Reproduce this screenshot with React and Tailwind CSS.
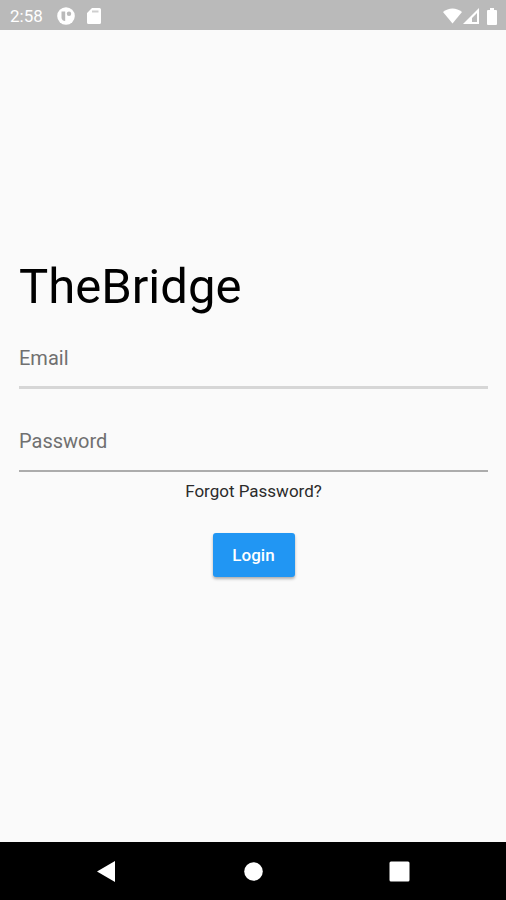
function StatusBar() {
  return (
    <header className="flex h-[30px] items-center bg-[#bababa] pt-[2px] pr-[9px] pl-[10px] text-white">
      <span className="text-[17px] leading-5">2:58</span>
      <svg className="ml-[14px] size-[18px]" viewBox="0 0 18 18" aria-hidden="true">
        <circle cx="9" cy="9" r="8.800" fill="#fff" />
        <path d="M4.500 4.500h3.700v9.500c-2.200 0-3.200-1.200-3.700-3z" fill="#bababa" />
        <circle cx="12" cy="6.800" r="2.200" fill="#bababa" />
      </svg>
      <svg className="ml-[12px] h-[16px] w-[14px]" viewBox="0 0 14 16" aria-hidden="true">
        <path d="M5 0h7.500A1.500 1.500 0 0 1 14 1.500v13a1.500 1.500 0 0 1-1.500 1.500h-11A1.500 1.500 0 0 1 0 14.500V5z" fill="#fff" />
        <path d="M5 2.500h6.500v2H5z" fill="#cfcfcf" />
      </svg>
      <svg className="ml-auto h-[16px] w-[19px]" viewBox="0 0 19 16" aria-hidden="true">
        <path d="M9.500 15.500 0 4C5.500-.8 13.500-.8 19 4z" fill="#fff" />
      </svg>
      <svg className="ml-[1px] size-[16px]" viewBox="0 0 16 16" aria-hidden="true">
        <path d="M16 0v16H0zM14 5 9 10v4h5z" fill="#fff" fillRule="evenodd" />
      </svg>
      <svg className="ml-[8px] h-[17px] w-[10px]" viewBox="0 0 10 17" aria-hidden="true">
        <path d="M3 0h4v2h2a1 1 0 0 1 1 1v13a1 1 0 0 1-1 1H1a1 1 0 0 1-1-1V3a1 1 0 0 1 1-1h2z" fill="#fff" />
      </svg>
    </header>
  );
}

function NavBar() {
  return (
    <nav className="flex h-[58px] items-center justify-center gap-[125px] bg-black">
      <button type="button" aria-label="Back">
        <svg className="size-[21px]" viewBox="0 0 21 21" aria-hidden="true">
          <path d="M18 0v21L0 10.500z" fill="#fff" />
        </svg>
      </button>
      <button type="button" aria-label="Home">
        <svg className="size-[21px]" viewBox="0 0 21 21" aria-hidden="true">
          <circle cx="10.500" cy="10.500" r="9.300" fill="#fff" />
        </svg>
      </button>
      <button type="button" aria-label="Recent apps">
        <svg className="size-[21px]" viewBox="0 0 21 21" aria-hidden="true">
          <rect x="0.500" y="0.500" width="20" height="20" rx="1.500" fill="#fff" />
        </svg>
      </button>
    </nav>
  );
}

export default function App() {
  return (
    <div className="flex min-h-screen flex-col bg-[#fafafa] font-['Roboto','Liberation_Sans',sans-serif]">
      <StatusBar />
      <main className="flex flex-1 flex-col justify-center pr-[18px] pb-[38px] pl-[19px]">
        <h1 className="text-[49px] leading-[58px] text-black">TheBridge</h1>
        <form className="flex flex-col" onSubmit={(e) => e.preventDefault()}>
          <input
            type="email"
            aria-label="Email"
            placeholder="Email"
            className="mt-[14px] h-[59px] w-full border-b-3 border-[#d6d6d6] bg-transparent text-[20px] leading-6 text-black outline-none placeholder:text-[#707070]"
          />
          <input
            type="password"
            aria-label="Password"
            placeholder="Password"
            className="mt-[24px] h-[59px] w-full border-b-2 border-[#acacac] bg-transparent text-[20px] leading-6 text-black outline-none placeholder:text-[#707070]"
          />
          <a href="#forgot" className="mt-[9px] self-center text-[17px] leading-5 text-[#2b2b2b]">
            Forgot Password?
          </a>
          <button
            type="submit"
            className="mt-[32px] h-[44px] w-[82px] self-center rounded-[3px] bg-[#2196f3] text-[17px] leading-5 font-medium text-white shadow-[0_2px_3px_rgba(0,0,0,0.3)]"
          >
            Login
          </button>
        </form>
      </main>
      <NavBar />
    </div>
  );
}
